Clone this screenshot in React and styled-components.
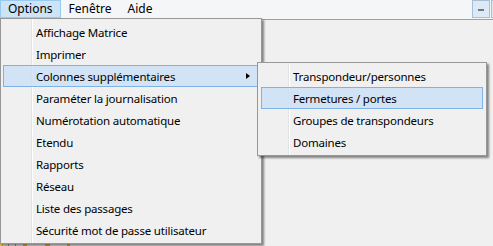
import React from "react";
import styled, { createGlobalStyle } from "styled-components";

const Global = createGlobalStyle`
  html, body { margin: 0; padding: 0; background: #f0f0f0; }
  body {
    font-family: "Noto Sans", "Liberation Sans", sans-serif;
    font-size: 11.5px;
    letter-spacing: -0.2px;
    color: #000;
  }
`;

const Root = styled.div`
  position: relative;
  width: 493px;
  height: 246px;
  overflow: hidden;
  display: flex;
  flex-direction: column;
  background: #f0f0f0;
`;

const MenuBar = styled.div`
  height: 19px;
  flex: none;
  display: flex;
  align-items: stretch;
  background: #f5f6f7;
  border-bottom: 1px solid #a0a0a0;
`;

const BarItem = styled.div`
  box-sizing: border-box;
  height: 18px;
  padding: 0 7px;
  display: flex;
  align-items: center;
  font-size: 12px;
  letter-spacing: 0;
  border: 1px solid ${(p) => (p.$active ? "#99c9ef" : "transparent")};
  background: ${(p) => (p.$active ? "#cce4f7" : "transparent")};
  line-height: 16px;
`;

const Spacer = styled.div`
  flex: 1;
`;

const WinButton = styled.div`
  flex: none;
  box-sizing: border-box;
  width: 18px;
  height: 18px;
  margin-right: ${(p) => p.$mr || 0}px;
  border: 1px solid #a9bfd6;
  background: #dde9f5;
  display: flex;
  align-items: center;
  justify-content: center;
  &::after {
    content: "";
    display: ${(p) => (p.$dash ? "block" : "none")};
    width: 6px;
    height: 2px;
    margin-top: 2px;
    background: #6d7a88;
  }
`;

const Workspace = styled.div`
  flex: 1;
  background: #f0f0f0;
`;

const Toolbar = styled.div`
  height: 3px;
  flex: none;
  display: flex;
  background: #f0f0f0;
`;

const ToolIcon = styled.div`
  width: ${(p) => p.$w}px;
  margin-left: ${(p) => p.$ml}px;
  background: ${(p) => p.$c};
`;

const Menu = styled.div`
  position: absolute;
  left: ${(p) => p.$x}px;
  top: ${(p) => p.$y}px;
  width: ${(p) => p.$w}px;
  box-sizing: border-box;
  padding: 2px ${(p) => p.$pr}px 2px ${(p) => p.$pl}px;
  background-color: #f0f0f0;
  background-image: linear-gradient(
    to right,
    transparent 30px,
    #e2e3e3 30px,
    #e2e3e3 31px,
    #ffffff 31px,
    #ffffff 32px,
    transparent 32px
  );
  border: 1px solid #979797;
  box-shadow: 2px 2px 2px rgba(0, 0, 0, 0.45);
  display: flex;
  flex-direction: column;
`;

const Item = styled.div`
  position: relative;
  box-sizing: border-box;
  height: 22px;
  display: flex;
  align-items: center;
  padding-left: ${(p) => p.$indent}px;
  border: 1px solid ${(p) => (p.$hl ? "#7fb3e6" : "transparent")};
  background: ${(p) => (p.$hl ? "rgba(204, 225, 246, 0.85)" : "transparent")};
  white-space: nowrap;
`;

const Arrow = styled.span`
  position: absolute;
  right: 7px;
  top: 7px;
  width: 0;
  height: 0;
  border-top: 3.5px solid transparent;
  border-bottom: 3.5px solid transparent;
  border-left: 4px solid #000;
`;

const mainItems = [
  "Affichage Matrice",
  "Imprimer",
  "Colonnes supplémentaires",
  "Paraméter la journalisation",
  "Numérotation automatique",
  "Etendu",
  "Rapports",
  "Réseau",
  "Liste des passages",
  "Sécurité mot de passe utilisateur",
];

const subItems = [
  "Transpondeur/personnes",
  "Fermetures / portes",
  "Groupes de transpondeurs",
  "Domaines",
];

export default function App() {
  return (
    <>
      <Global />
      <Root>
        <MenuBar>
          <BarItem $active>Options</BarItem>
          <BarItem>Fenêtre</BarItem>
          <BarItem>Aide</BarItem>
          <Spacer />
          <WinButton $dash $mr={1} />
          <WinButton $mr={-16} />
        </MenuBar>
        <Workspace />
        <Toolbar>
          <ToolIcon $w={3} $ml={0} $c="#e8b73a" />
          <ToolIcon $w={1} $ml={5} $c="#9a9a9a" />
          <ToolIcon $w={1} $ml={6} $c="#9a9a9a" />
          <ToolIcon $w={4} $ml={7} $c="#e8b73a" />
          <ToolIcon $w={5} $ml={18} $c="#e8b73a" />
          <ToolIcon $w={3} $ml={17} $c="#e8b73a" />
        </Toolbar>
        <Menu $x={0} $y={18} $w={262} $pl={2} $pr={3}>
          {mainItems.map((t, i) => (
            <Item key={t} $indent={32} $hl={i === 2}>
              {t}
              {i === 2 && <Arrow />}
            </Item>
          ))}
        </Menu>
        <Menu $x={257} $y={62} $w={230} $pl={3} $pr={3}>
          {subItems.map((t, i) => (
            <Item key={t} $indent={31} $hl={i === 1}>
              {t}
            </Item>
          ))}
        </Menu>
      </Root>
    </>
  );
}
